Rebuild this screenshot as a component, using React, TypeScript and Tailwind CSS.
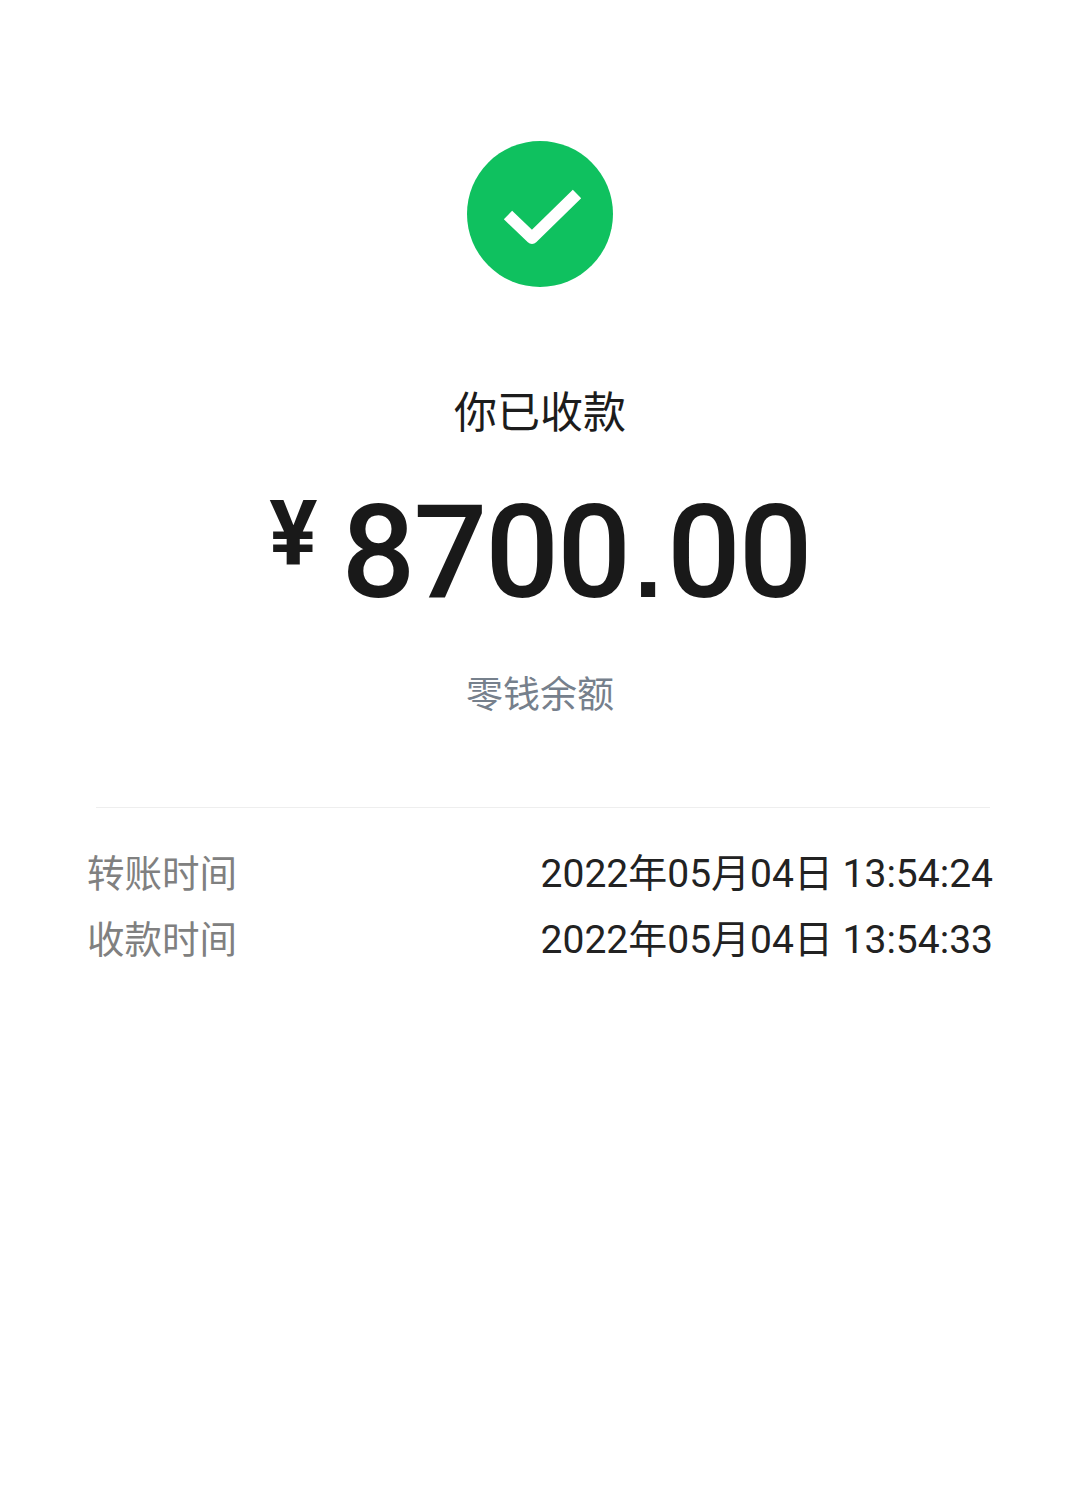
const cjk = "font-['Roboto','Noto_Sans_CJK_SC',sans-serif]";

const rows = [
  { label: "转账时间", value: "2022年05月04日 13:54:24" },
  { label: "收款时间", value: "2022年05月04日 13:54:33" },
];

export default function App() {
  return (
    <div className={`${cjk} w-[1080px] h-[1510px] bg-white flex flex-col items-center pt-[141px]`}>
      <div className="w-[146px] h-[146px] rounded-full bg-[#0fc15f] flex items-center justify-center">
        <svg width="146" height="146" viewBox="0 0 146 146" fill="none">
          <path d="M41 74 L65 97 L110 53" stroke="#ffffff" strokeWidth="12" strokeLinejoin="round" />
        </svg>
      </div>
      <h1 className="mt-[99px] text-[43px] leading-[54px] font-normal text-[#1c1c1c]">你已收款</h1>
      <div className="mt-[33px] h-[160px] flex items-start text-[#191919]">
        <span className="mt-[12px] mr-[24px] text-[90px] leading-[100px] font-bold">¥</span>
        <span className="flex items-baseline text-[130px] leading-[160px] font-medium tracking-[-2px]">
          870
          <span>0</span>
          <span className="mx-[5px] font-['Liberation_Sans',sans-serif] text-[100px] font-bold tracking-normal">.</span>
          00
        </span>
      </div>
      <div className="mt-[39px] text-[37px] leading-[48px] text-[#76808c]">零钱余额</div>
      <div className="mt-[87px] w-[894px] ml-[6px] border-t border-[#eeeeee]" />
      <div className="mt-[39px] w-[906px] flex flex-col gap-[12px]">
        {rows.map((row) => (
          <div key={row.label} className="flex justify-between items-center h-[54px]">
            <span className="text-[37.5px] text-[#808080]">{row.label}</span>
            <span className="text-[39px] text-[#222222]">{row.value}</span>
          </div>
        ))}
      </div>
    </div>
  );
}
